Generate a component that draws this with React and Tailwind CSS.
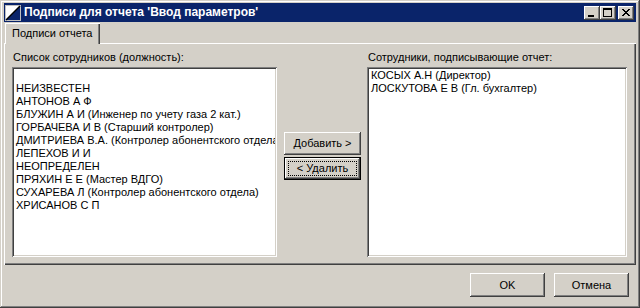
import React from "react";

const raised =
  "shadow-[inset_-1px_-1px_0_#404040,inset_1px_1px_0_#ffffff,inset_-2px_-2px_0_#808080]";
const sunken =
  "shadow-[inset_1px_1px_0_#808080,inset_-1px_-1px_0_#ffffff,inset_2px_2px_0_#404040,inset_-2px_-2px_0_#d4d0c8]";

function CapButton({ children, className = "" }) {
  return (
    <div className={`w-[16px] h-[14px] bg-[#d4d0c8] ${raised} ${className}`}>
      <svg width="16" height="14" viewBox="0 0 16 14" shapeRendering="crispEdges">
        {children}
      </svg>
    </div>
  );
}

function CloseGlyph() {
  const rects = [];
  for (let i = 0; i < 7; i++) {
    rects.push(<rect key={"a" + i} x={4 + i} y={3 + i} width="2" height="1" fill="#000" />);
    rects.push(<rect key={"b" + i} x={10 - i} y={3 + i} width="2" height="1" fill="#000" />);
  }
  return rects;
}

function AppIcon() {
  return (
    <svg width="16" height="16" viewBox="0 0 16 16" shapeRendering="crispEdges">
      <rect x="0" y="0" width="16" height="16" fill="#ffffff" />
      <rect x="0.5" y="0.5" width="15" height="15" fill="none" stroke="#c0c0c0" />
      <polygon points="15,1 15,15 1,15" fill="#0a246a" />
      <line x1="1" y1="15" x2="15" y2="1" stroke="#000" strokeWidth="1.5" shapeRendering="auto" />
    </svg>
  );
}

function Btn({ children, w = "w-[77px]", h = "h-[23px]" }) {
  return (
    <div className={`${w} ${h} bg-[#d4d0c8] ${raised} flex items-center justify-center`}>
      {children}
    </div>
  );
}

function FocusBtn({ children }) {
  return (
    <div className="w-[77px] h-[23px] border border-black bg-[#d4d0c8] flex">
      <div className={`flex-1 p-[3px] flex ${raised}`}>
        <div className="flex-1 border border-dotted border-black flex items-center justify-center">
          {children}
        </div>
      </div>
    </div>
  );
}

const leftItems = [
  "",
  "НЕИЗВЕСТЕН",
  "АНТОНОВ А Ф",
  "БЛУЖИН А И (Инженер по учету газа 2 кат.)",
  "ГОРБАЧЕВА И В (Старший контролер)",
  "ДМИТРИЕВА В.А. (Контролер абонентского отдела)",
  "ЛЕПЕХОВ И И",
  "НЕОПРЕДЕЛЕН",
  "ПРЯХИН Е Е (Мастер ВДГО)",
  "СУХАРЕВА Л (Контролер абонентского отдела)",
  "ХРИСАНОВ С П",
];

const rightItems = ["КОСЫХ А.Н (Директор)", "ЛОСКУТОВА Е В (Гл. бухгалтер)"];

function ListBox({ items, w }) {
  return (
    <div className={`${w} h-[190px] bg-white ${sunken} p-[2px] overflow-hidden`}>
      <div className="pl-[2px] overflow-hidden">
        {items.map((t, i) => (
          <div key={i} className="h-[13px] leading-[13px] whitespace-nowrap">
            {t || "\u00a0"}
          </div>
        ))}
      </div>
    </div>
  );
}

export default function App() {
  return (
    <div
      className={`w-[640px] h-[308px] bg-[#d4d0c8] flex flex-col px-[4px] pt-[3px] pb-[4px] text-[11px] text-black font-['Liberation_Sans',Arial,sans-serif] shadow-[inset_-1px_-1px_0_#404040,inset_1px_1px_0_#d4d0c8,inset_-2px_-2px_0_#808080,inset_2px_2px_0_#ffffff]`}
    >
      {/* Title bar */}
      <div className="h-[19px] bg-[#0a246a] flex items-center pl-[1px] pr-[2px]">
        <AppIcon />
        <div className="ml-[3px] text-white font-bold text-[12px] leading-[19px] whitespace-nowrap flex-1">
          Подписи для отчета 'Ввод параметров'
        </div>
        <div className="flex items-center">
          <CapButton>
            <rect x="4" y="9" width="6" height="2" fill="#000" />
          </CapButton>
          <CapButton>
            <rect x="3" y="2" width="9" height="2" fill="#000" />
            <rect x="3" y="2" width="1" height="9" fill="#000" />
            <rect x="11" y="2" width="1" height="9" fill="#000" />
            <rect x="3" y="10" width="9" height="1" fill="#000" />
          </CapButton>
          <CapButton className="ml-[2px]">
            <CloseGlyph />
          </CapButton>
        </div>
      </div>

      {/* Tabs */}
      <div className="h-[20px] mt-[1px] flex pl-[1px]">
        <div className="relative z-10 h-[21px] w-[95px] bg-[#d4d0c8] shadow-[inset_1px_1px_0_#ffffff,inset_-1px_0_0_#404040,inset_-2px_0_0_#808080] pl-[7px] pt-[4px] leading-[13px] whitespace-nowrap">
          Подписи отчета
        </div>
      </div>

      {/* Tab panel */}
      <div className="h-[222px] flex shadow-[inset_1px_1px_0_#ffffff,inset_-1px_-1px_0_#404040,inset_-2px_-2px_0_#808080] pt-[8px] pl-[8px]">
        <div className="flex flex-col">
          <div className="h-[13px] leading-[13px] mb-[3px] pl-[1px]">Список сотрудников (должность):</div>
          <ListBox items={leftItems} w="w-[265px]" />
        </div>
        <div className="ml-[7px] mt-[81px] flex flex-col gap-[2px]">
          <Btn>Добавить &gt;</Btn>
          <FocusBtn>&lt; Удалить</FocusBtn>
        </div>
        <div className="ml-[6px] flex flex-col">
          <div className="h-[13px] leading-[13px] mb-[3px] pl-[1px]">Сотрудники, подписывающие отчет:</div>
          <ListBox items={rightItems} w="w-[260px]" />
        </div>
      </div>

      {/* Footer */}
      <div className="flex-1 flex justify-end items-start pt-[8px] pr-[7px] gap-[9px]">
        <Btn w="w-[75px]" h="h-[24px]">OK</Btn>
        <Btn w="w-[75px]" h="h-[24px]">Отмена</Btn>
      </div>
    </div>
  );
}
